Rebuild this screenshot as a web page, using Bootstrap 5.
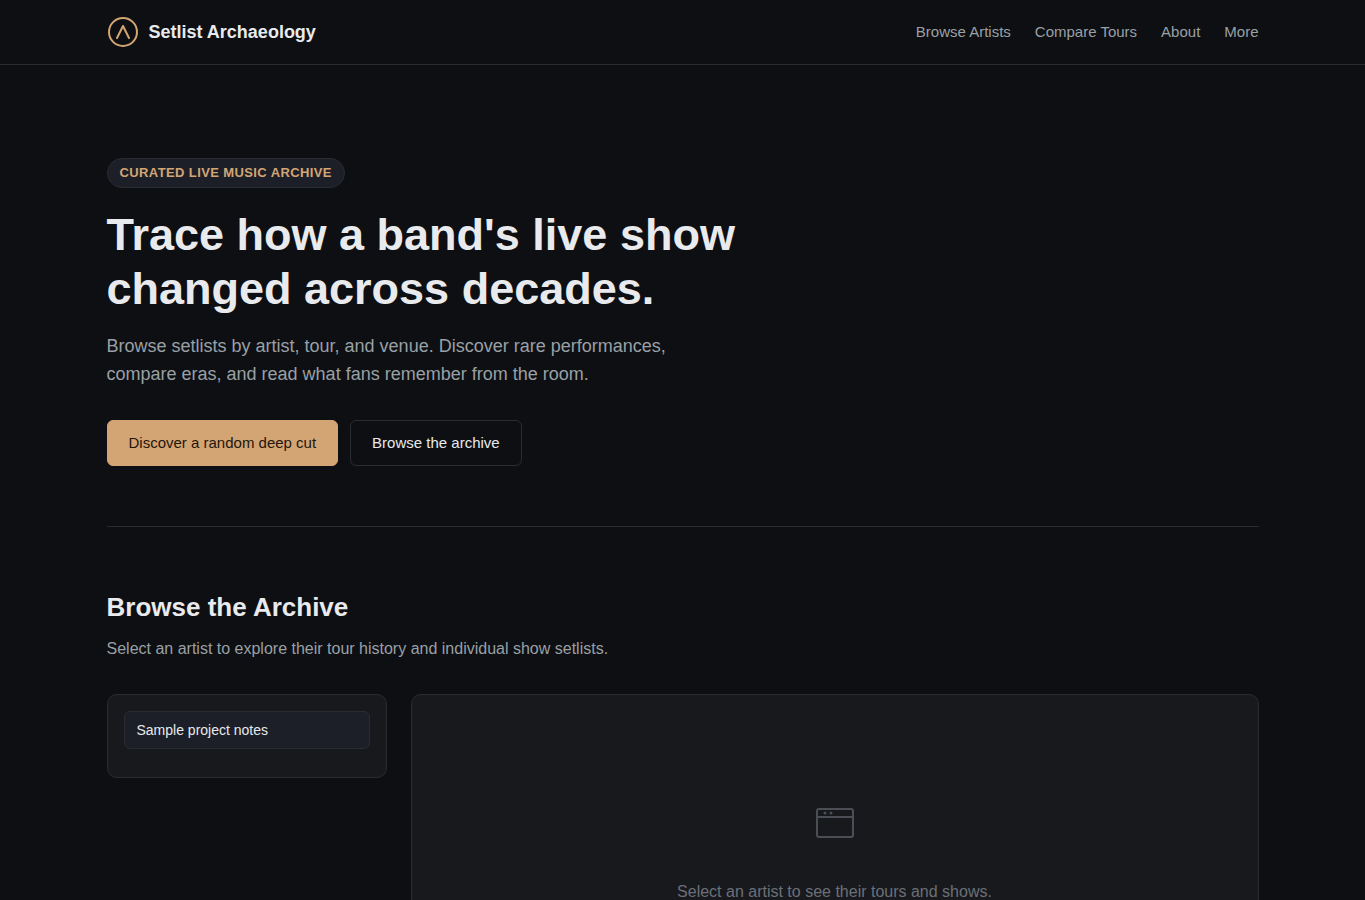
<!DOCTYPE html>
<html lang="en" data-bs-theme="dark">
<head>
<meta charset="utf-8">
<meta name="viewport" content="width=device-width, initial-scale=1">
<title>Setlist Archaeology</title>
<link rel="stylesheet" href="https://cdn.jsdelivr.net/npm/bootstrap@5.3.0/dist/css/bootstrap.min.css">
<style>
:root { --line: #2a2c30; --panel: #18191d; --raised: #1c1f27; --accent: #d4a574; --bright: #e8eaed; --muted: #9aa0a6; }
body { background: #0d0f12; color: var(--bright); font-family: "Liberation Sans", Arial, sans-serif; font-size: 16px; }
.site-wrap { max-width: 1200px; padding-left: 24px; padding-right: 24px; }
.site-header { border-bottom: 1px solid var(--line); }
.site-header .navbar { min-height: 64px; }
.site-header .navbar-brand { font-size: 18px; font-weight: 600; color: var(--bright); gap: 10px; }
.site-header .navbar-nav .nav-link { font-size: 15px; color: var(--muted); padding: 0; }
.hero { padding: 93px 0 60px; border-bottom: 1px solid var(--line); }
.eyebrow { display: inline-block; height: 30px; padding: 0 12px; line-height: 28px; font-size: 13px; font-weight: 600; letter-spacing: 0.03em; color: var(--accent); background: var(--raised); border: 1px solid var(--line); }
.hero h1 { color: var(--bright); font-size: 45px; line-height: 54px; font-weight: 700; max-width: 720px; margin: 20px 0 16px; }
.hero-text { font-size: 18px; line-height: 28px; color: var(--muted); max-width: 600px; margin-bottom: 32px; }
.hero-actions { gap: 12px; }
.hero .btn { font-size: 15px; line-height: 24px; padding: 10px 20px; border-radius: 6px; }
.hero .btn-accent { --bs-btn-color: #1f160c; --bs-btn-bg: #d4a574; --bs-btn-border-color: #d4a574; --bs-btn-hover-bg: #dfb486; --bs-btn-hover-color: #1f160c; padding: 10px 21px; }
.hero .btn-line { --bs-btn-color: #e8eaed; --bs-btn-border-color: #2a2c30; --bs-btn-hover-bg: #1c1f27; --bs-btn-hover-color: #e8eaed; padding: 10px 21px; }
.archive { padding: 64px 0; }
.archive h2 { color: var(--bright); font-size: 26px; line-height: 32px; font-weight: 600; margin-bottom: 12px; }
.archive-intro { line-height: 28px; color: var(--muted); margin-bottom: 31px; }
.archive-grid { display: grid; grid-template-columns: 280px 1fr; gap: 24px; align-items: start; }
.panel { background: var(--panel); border: 1px solid var(--line); border-radius: 10px; }
.artist-panel { padding: 16px 16px 28px; }
.artist-item { font-size: 14px; line-height: 20px; padding: 8px 12px; color: var(--bright); background: var(--raised); border: 1px solid var(--line); border-radius: 6px; }
.detail-panel { min-height: 400px; padding: 104px 24px; color: #6b7078; }
.detail-panel svg { margin-bottom: 32px; color: #4b4e55; }
.detail-panel p { line-height: 26px; }
@media (max-width: 767px) { .archive-grid { grid-template-columns: 1fr; } }
</style>
</head>
<body>
<header class="site-header">
  <nav class="navbar navbar-expand p-0" aria-label="Main">
    <div class="container-fluid site-wrap">
      <a class="navbar-brand d-flex align-items-center p-0 m-0" href="#">
        <svg width="32" height="32" viewBox="0 0 32 32" fill="none" stroke="#d4a574" stroke-width="2" aria-hidden="true"><circle cx="16" cy="16" r="14"/><path d="M10 22l6-12 6 12" stroke-linecap="round" stroke-linejoin="round"/></svg>
        <span>Setlist Archaeology</span>
      </a>
      <ul class="navbar-nav gap-4">
        <li class="nav-item"><a class="nav-link" href="#archive">Browse Artists</a></li>
        <li class="nav-item"><a class="nav-link" href="#">Compare Tours</a></li>
        <li class="nav-item"><a class="nav-link" href="#">About</a></li>
        <li class="nav-item"><a class="nav-link" href="#">More</a></li>
      </ul>
    </div>
  </nav>
</header>
<main class="container-fluid site-wrap">
  <section class="hero">
    <div class="d-flex"><span class="eyebrow rounded-pill text-uppercase">Curated live music archive</span></div>
    <h1>Trace how a band's live show changed across decades.</h1>
    <p class="hero-text">Browse setlists by artist, tour, and venue. Discover rare performances, compare eras, and read what fans remember from the room.</p>
    <div class="hero-actions d-flex flex-wrap">
      <button type="button" class="btn btn-accent">Discover a random deep cut</button>
      <a class="btn btn-line" href="#archive">Browse the archive</a>
    </div>
  </section>
  <section class="archive" id="archive">
    <h2>Browse the Archive</h2>
    <p class="archive-intro">Select an artist to explore their tour history and individual show setlists.</p>
    <div class="archive-grid">
      <aside class="panel artist-panel">
        <button type="button" class="artist-item w-100 text-start d-block">Sample project notes</button>
      </aside>
      <div class="panel detail-panel d-flex flex-column align-items-center text-center">
        <svg width="48" height="48" viewBox="0 0 48 48" fill="none" stroke="currentColor" stroke-width="2" aria-hidden="true"><rect x="6" y="10" width="36" height="28" rx="2"/><path d="M6 18h36"/><g fill="currentColor" stroke="none"><circle cx="14" cy="14" r="1.5"/><circle cx="20" cy="14" r="1.5"/></g></svg>
        <p class="mb-0">Select an artist to see their tours and shows.</p>
      </div>
    </div>
  </section>
</main>
<script src="https://cdn.jsdelivr.net/npm/bootstrap@5.3.0/dist/js/bootstrap.bundle.min.js"></script>
</body>
</html>
